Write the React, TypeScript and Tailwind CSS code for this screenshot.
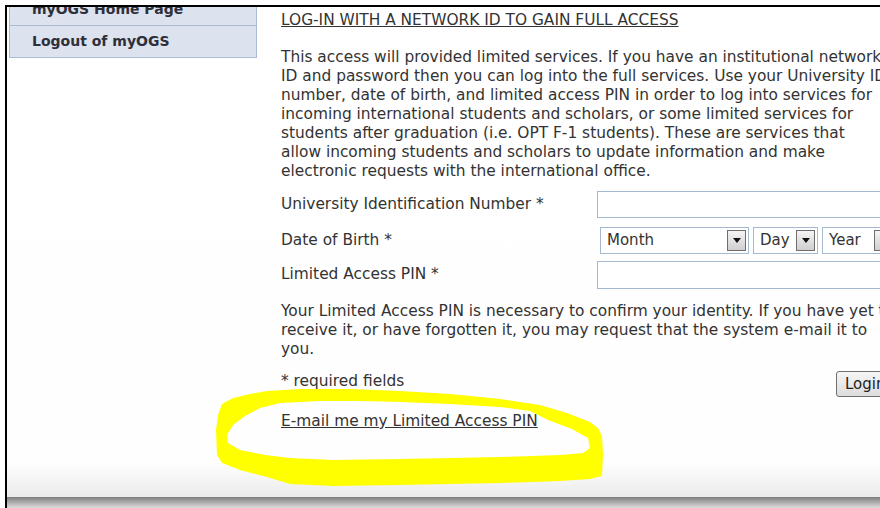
import React from "react";

function DropButton() {
  return (
    <div className="absolute right-[2px] top-[2px] bottom-[2px] flex w-[19px] items-center justify-center border border-[#6e6e6e] bg-[linear-gradient(to_bottom,#f4f4f4,#cfcfcf)]">
      <svg width="8" height="5" viewBox="0 0 8 5">
        <path d="M0 0 H8 L4 5 Z" fill="#111" />
      </svg>
    </div>
  );
}

function FakeSelect({ label, width }: { label: string; width: string }) {
  return (
    <div className={`relative h-[27px] shrink-0 border border-[#a5b9d3] bg-white ${width}`}>
      <span className="absolute left-[6px] top-[3px] text-[15px] leading-[19px]">{label}</span>
      <DropButton />
    </div>
  );
}

export default function App() {
  return (
    <div className="relative h-[508px] w-[880px] overflow-hidden bg-white pl-[5px] pt-[5px] font-['DejaVu_Sans',Verdana,sans-serif] text-[#333]">
      <div className="flex h-[503px] w-[875px] flex-col border-l-2 border-t-2 border-black">
        <div className="flex min-h-0 flex-1 overflow-hidden bg-[linear-gradient(to_bottom,#ffffff_0%,#fefefe_93%,#ebebeb_100%)]">
          {/* side navigation */}
          <div className="-mt-[14px] ml-[2px] w-[248px] shrink-0 self-start">
            <div className="flex h-[33px] items-center border border-[#a9bcd6] bg-[#dce3ee] pl-[22px] text-[14px] font-bold text-[#2f2f3a]">
              myOGS Home Page
            </div>
            <div className="flex h-[32px] items-center border-x border-b border-[#a9bcd6] bg-[#dce3ee] pl-[22px] text-[14px] font-bold text-[#2f2f3a]">
              Logout of myOGS
            </div>
          </div>

          {/* main column */}
          <div className="ml-[24px] w-[700px] shrink-0 pt-[4px] text-[15.4px] leading-[19px]">
            <a href="#" className="underline">LOG-IN WITH A NETWORK ID TO GAIN FULL ACCESS</a>

            <p className="mt-[18px] whitespace-nowrap">
              This access will provided limited services. If you have an institutional network
              <br />
              ID and password then you can log into the full services. Use your University ID
              <br />
              number, date of birth, and limited access PIN in order to log into services for
              <br />
              incoming international students and scholars, or some limited services for
              <br />
              students after graduation (i.e. OPT F-1 students). These are services that
              <br />
              allow incoming students and scholars to update information and make
              <br />
              electronic requests with the international office.
            </p>

            <div className="mt-[10px] grid grid-cols-[316px_1fr] gap-y-[7px]">
              <div className="flex h-[27px] items-center">University Identification Number *</div>
              <input type="text" className="h-[27px] w-[320px] border border-[#a5b9d3] bg-white" />

              <div className="mt-[2px] flex h-[27px] items-center">Date of Birth *</div>
              <div className="ml-[3px] mt-[2px] flex gap-[4px]">
                <FakeSelect label="Month" width="w-[149px]" />
                <FakeSelect label="Day" width="w-[65px]" />
                <FakeSelect label="Year" width="w-[74px]" />
              </div>

              <div className="flex h-[27px] items-center">Limited Access PIN *</div>
              <input type="text" className="h-[28px] w-[320px] border border-[#a5b9d3] bg-white" />
            </div>

            <p className="mt-[13px] whitespace-nowrap">
              Your Limited Access PIN is necessary to confirm your identity. If you have yet to
              <br />
              receive it, or have forgotten it, you may request that the system e-mail it to
              <br />
              you.
            </p>

            <div className="mt-[12px] grid grid-cols-[316px_1fr]">
              <div className="pt-[1px]">* required fields</div>
              <div>
                <button className="ml-[239px] h-[26px] rounded-[3px] border border-[#707070] bg-[linear-gradient(to_bottom,#f6f6f6,#dcdcdc)] px-[8px] text-[15px] text-[#222]">
                  Login
                </button>
              </div>
            </div>

            <a href="#" className="mt-[15px] block w-fit underline">E-mail me my Limited Access PIN</a>
          </div>
        </div>
        <div className="h-[11px] shrink-0 bg-[linear-gradient(to_bottom,#7c7c7c,#a4a4a4_40%,#dcdcdc)]" />
      </div>

      {/* highlighter loop drawn over the page */}
      <svg className="pointer-events-none absolute left-0 top-0" width="880" height="508" viewBox="0 0 880 508">
        <path
          fillRule="evenodd"
          fill="#ffff00"
          d="M222,404 L233,398 L250,394 L267,391 L300,389 L350,389 L400,391 L450,394 L500,399 L540,405 L567,413 L590,422 L598,428 L602,436 L603,455 L602,476 L590,479 L560,481 L533,482 L500,483 L450,484 L400,485 L333,486 L290,484 L267,477 L240,470 L222,463 L217,455 L216,430 L218,415 Z M233,425 L227,435 L228,443 L240,450 L265,455 L290,458 L333,460 L400,459 L450,458 L500,457 L533,456 L560,455 L583,453 L590,448 L588,438 L572,429 L548,420 L530,411 L500,407 L450,404 L400,402 L360,401 L320,401 L280,403 L260,408 L245,416 Z"
        />
      </svg>
    </div>
  );
}
